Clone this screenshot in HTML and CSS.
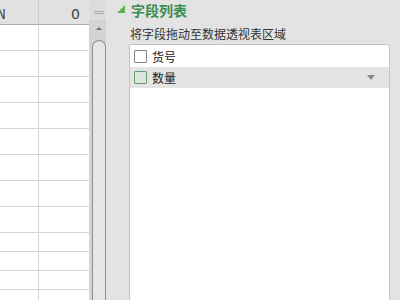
FILE: index.html
```html
<!DOCTYPE html>
<html lang="zh-CN">
<head>
    <meta charset="UTF-8">
    <title>字段列表</title>
    <link rel="stylesheet" href="styles.css">
</head>
<body>
    <main class="app">
        <section class="sheet">
            <div class="grid">
                <div class="cell head">N</div><div class="cell head">O</div>
                <div class="cell"></div><div class="cell"></div>
                <div class="cell"></div><div class="cell"></div>
                <div class="cell"></div><div class="cell"></div>
                <div class="cell"></div><div class="cell"></div>
                <div class="cell"></div><div class="cell"></div>
                <div class="cell"></div><div class="cell"></div>
                <div class="cell"></div><div class="cell"></div>
                <div class="cell"></div><div class="cell"></div>
                <div class="cell"></div><div class="cell"></div>
                <div class="cell"></div><div class="cell"></div>
                <div class="cell"></div><div class="cell"></div>
                <div class="cell"></div><div class="cell"></div>
            </div>
        </section>
        <div class="scroll">
            <div class="grip"></div>
            <div class="track">
                <div class="arrow"></div>
                <div class="thumb"></div>
            </div>
        </div>
        <aside class="panel">
            <h2 class="title"><span class="corner"></span>字段列表</h2>
            <p class="hint">将字段拖动至数据透视表区域</p>
            <ul class="fields">
                <li class="field"><span class="check"></span>货号</li>
                <li class="field active"><span class="check"></span>数量<span class="drop"></span></li>
            </ul>
        </aside>
    </main>
</body>
</html>
```

FILE: styles.css
```css
body {
    margin: 0;
    width: 400px;
    height: 300px;
    overflow: hidden;
    font-family: "Noto Sans CJK SC", "Liberation Sans", sans-serif;
}
.app {
    display: flex;
    height: 300px;
}
.sheet {
    width: 89px;
    overflow: hidden;
    background: #fff;
}
.grid {
    display: grid;
    grid-template-columns: 74px 74px;
    grid-template-rows: 25px repeat(8, 26px) repeat(4, 19px);
    margin-left: -35px;
}
.cell {
    box-sizing: border-box;
    border-right: 1px solid #d4d4d4;
    border-bottom: 1px solid #d4d4d4;
}
.head {
    background: #e1e1e1;
    border-right-color: #cacaca;
    border-bottom-color: #ababab;
    font-family: "Liberation Mono", monospace;
    font-size: 14px;
    line-height: 16px;
    color: #444;
    text-align: center;
    padding-top: 7px;
}
.scroll {
    width: 17px;
    display: flex;
    flex-direction: column;
    background: #d3d3d3;
}
.grip {
    height: 20px;
    background: #dcdcdc;
    position: relative;
}
.grip::before {
    content: "";
    position: absolute;
    left: 5px;
    top: 11px;
    width: 10px;
    height: 1px;
    border-top: 1px solid #a9a9a9;
    border-bottom: 1px solid #a9a9a9;
}
.track {
    flex: 1;
    display: flex;
    flex-direction: column;
    padding-left: 3px;
}
.arrow {
    width: 0;
    height: 0;
    margin: 7px 0 0 4px;
    border-left: 3px solid transparent;
    border-right: 3px solid transparent;
    border-bottom: 3px solid #6e6e6e;
}
.thumb {
    flex: 1;
    margin-top: 10px;
    border: 1px solid #8e8e8e;
    border-bottom: 0;
    border-radius: 7px 7px 0 0;
    background: #e6e6e6;
}
.panel {
    flex: 1;
    background: #e3e3e3;
    padding-left: 23px;
}
.title {
    margin: 0;
    height: 20px;
    display: flex;
    align-items: center;
    font-size: 14px;
    font-weight: bold;
    color: #3b8f54;
    position: relative;
    padding-left: 2px;
}
.corner {
    position: absolute;
    left: -12px;
    top: 5px;
    width: 0;
    height: 0;
    border-left: 8px solid transparent;
    border-bottom: 8px solid #5fae47;
}
.hint {
    margin: 5px 0 0 1px;
    font-size: 12px;
    line-height: 18px;
    color: #333;
}
.fields {
    list-style: none;
    margin: 1px 0 0;
    padding: 1px 0 0;
    width: 259px;
    height: 260px;
    background: #fff;
    border: 1px solid #c4c4c4;
    border-radius: 0 3px 0 0;
}
.field {
    height: 21px;
    display: flex;
    align-items: center;
    padding-left: 4px;
    font-size: 12px;
    color: #222;
}
.field.active {
    background: #e4e4e4;
}
.check {
    box-sizing: border-box;
    width: 13px;
    height: 13px;
    margin-right: 5px;
    border: 1px solid #848484;
    border-radius: 1px;
    background: #fff;
}
.active .check {
    border-color: #62a073;
    background: #dde5dd;
}
.drop {
    margin-left: auto;
    margin-right: 14px;
    width: 0;
    height: 0;
    border-left: 4px solid transparent;
    border-right: 4px solid transparent;
    border-top: 5px solid #8a8a8a;
}
```
